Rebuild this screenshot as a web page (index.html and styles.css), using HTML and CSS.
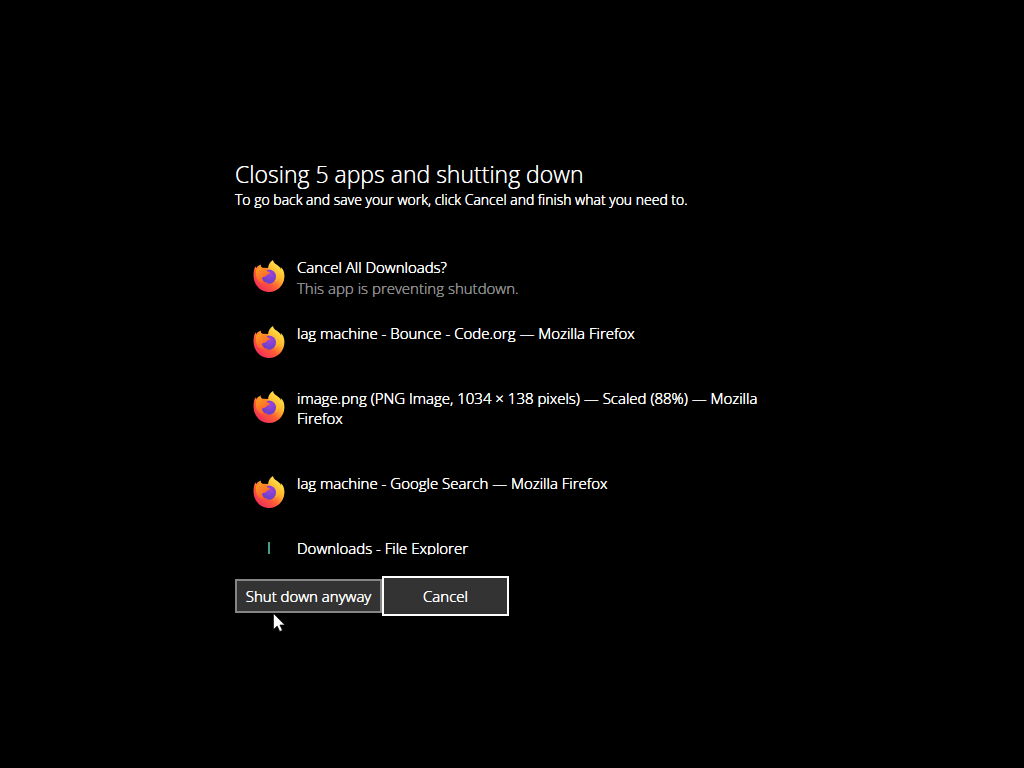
FILE: index.html
```html
<!DOCTYPE html>
<html lang="en">
<head>
<meta charset="utf-8">
<meta name="viewport" content="width=device-width, initial-scale=1">
<title>Shutting down</title>
<link rel="stylesheet" href="styles.css">
</head>
<body>
<svg class="defs" aria-hidden="true">
  <defs>
    <linearGradient id="flame" x1="0.85" y1="0.1" x2="0.2" y2="0.95">
      <stop offset="0.05" stop-color="#ffe34a"/>
      <stop offset="0.35" stop-color="#ffb52c"/>
      <stop offset="0.65" stop-color="#ff5a36"/>
      <stop offset="1" stop-color="#f02a5c"/>
    </linearGradient>
    <linearGradient id="orange" x1="0" y1="0" x2="0.6" y2="1">
      <stop offset="0" stop-color="#ffa01e"/>
      <stop offset="1" stop-color="#ff5430"/>
    </linearGradient>
    <radialGradient id="globe" cx="0.6" cy="0.3" r="0.8">
      <stop offset="0" stop-color="#a044d8"/>
      <stop offset="1" stop-color="#5a3fc8"/>
    </radialGradient>
    <symbol id="firefox" viewBox="0 0 32 32">
      <path fill="url(#flame)" d="M20 0C17 2 15 5 15.2 8L9.5 7.8C8 6.6 7.6 5.8 7.8 4.6C5.8 5.4 4.3 6.3 3.4 8.1C2.8 7.5 2.6 6.8 2.8 6C1 8.4 0.4 12 0.6 16.4C1 25 7.4 32 16 32C25 32 31 25 31.4 17C31.6 12 30.2 9 27.5 7C28 7.8 28.2 8.8 28.2 9.4C26 4.6 20.6 4.6 20 0Z"/>
      <circle cx="15.8" cy="16.6" r="7.2" fill="url(#globe)"/>
      <path fill="url(#orange)" d="M3 10C5 7.6 8 7.2 10 8.4C12 7.5 14 8 15.4 8.6C14.6 9.4 14 10.2 14 11.1C14.2 12.2 17 12 17 12.7C16.8 14 14.8 14.3 14 14.8C13.2 15.4 13.6 16.2 12.4 16.4C10.7 16.6 9.2 16.8 9 18.4C9.5 21.2 12.4 23 15.8 22.7C10 25.5 3.6 21.7 3 15Z"/>
      <path fill="#ffc52d" opacity="0.65" d="M21 10C24.5 13 25 18 21.8 22C27 19 27 12 21 10Z"/>
    </symbol>
  </defs>
</svg>
<main class="screen">
  <header>
    <h1 class="title">Closing 5 apps and shutting down</h1>
    <p class="subtitle">To go back and save your work, click Cancel and finish what you need to.</p>
  </header>
  <ul class="apps">
    <li class="app">
      <svg class="icon" aria-hidden="true"><use href="#firefox"/></svg>
      <div class="text"><p>Cancel All Downloads?</p><p class="status">This app is preventing shutdown.</p></div>
    </li>
    <li class="app">
      <svg class="icon" aria-hidden="true"><use href="#firefox"/></svg>
      <div class="text"><p>lag machine - Bounce - Code.org — Mozilla Firefox</p></div>
    </li>
    <li class="app tall">
      <svg class="icon" aria-hidden="true"><use href="#firefox"/></svg>
      <div class="text"><p>image.png (PNG Image, 1034 × 138 pixels) — Scaled (88%) — Mozilla Firefox</p></div>
    </li>
    <li class="app">
      <svg class="icon" aria-hidden="true"><use href="#firefox"/></svg>
      <div class="text"><p>lag machine - Google Search — Mozilla Firefox</p></div>
    </li>
    <li class="app">
      <svg class="icon" viewBox="0 0 32 32" aria-hidden="true"><path fill="#3f9d88" d="M15 1h2v12h-2z"/></svg>
      <div class="text"><p>Downloads - File Explorer</p></div>
    </li>
  </ul>
  <div class="actions">
    <button class="button" type="button">Shut down anyway</button>
    <button class="button focused" type="button">Cancel</button>
  </div>
</main>
<svg class="cursor" viewBox="0 0 12 19" aria-hidden="true"><path fill="#fff" stroke="#000" stroke-width="0.6" d="M.5.5V16.5L4.2 13L6.8 18.5L9.4 17.3L6.9 12H11.8Z"/></svg>
</body>
</html>
```
FILE: styles.css
```css
* { box-sizing: border-box; }
body {
  margin: 0;
  min-height: 100vh;
  background: #000;
  color: #fff;
  font-family: "Open Sans", "Noto Sans", sans-serif;
  font-size: 15px;
  font-weight: 300;
  line-height: 20px;
  text-shadow: 0 0 currentColor, 0 0 currentColor;
}
h1, p, ul { margin: 0; padding: 0; }
.defs { position: absolute; width: 0; height: 0; }
.screen {
  max-width: 554px;
  margin: 0 auto;
  padding-top: 159px;
}
.title { font-size: 23px; font-weight: 300; line-height: 31px; text-shadow: 0 0 currentColor; }
.subtitle { font-size: 14px; }
.apps {
  list-style: none;
  height: 298px;
  margin-top: 47px;
  padding-left: 18px;
  overflow: hidden;
}
.app { display: flex; gap: 12px; min-height: 45px; margin-bottom: 20px; }
.tall { min-height: 65px; }
.icon { flex: none; width: 32px; height: 32px; margin-top: 3px; }
.text { max-width: 480px; }
.status { color: #8c8c8c; line-height: 22px; padding-bottom: 4px; }
.actions { display: flex; align-items: center; margin-top: 21px; }
.button {
  width: 147px;
  height: 34px;
  padding: 0;
  background: #333;
  border: 2px solid #858585;
  color: #fff;
  font: inherit;
  text-shadow: inherit;
}
.focused { width: 127px; height: 40px; border-color: #fff; }
.cursor { position: absolute; left: 273px; top: 613px; width: 12px; height: 19px; }
```
